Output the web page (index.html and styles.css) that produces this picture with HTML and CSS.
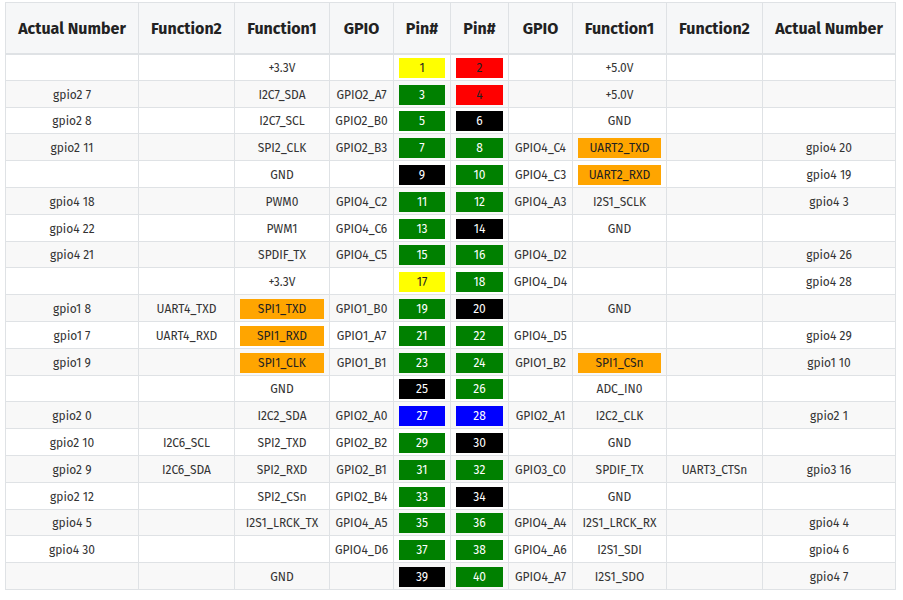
FILE: index.html
```html
<!DOCTYPE html>
<html>
<head>
<meta charset="utf-8">
<link rel="stylesheet" href="styles.css">
</head>
<body>
<table class="pins">
<colgroup>
<col class="c-act"><col class="c-f2"><col class="c-f1"><col class="c-gpio"><col class="c-pin"><col class="c-pin2"><col class="c-gpio"><col class="c-f1r"><col class="c-f2r"><col class="c-actr">
</colgroup>
<thead>
<tr><th>Actual Number</th><th>Function2</th><th>Function1</th><th>GPIO</th><th>Pin#</th><th>Pin#</th><th>GPIO</th><th>Function1</th><th>Function2</th><th>Actual Number</th></tr>
</thead>
<tbody>
<tr><td></td><td></td><td>+3.3V</td><td></td><td><div class="pin yellow">1</div></td><td><div class="pin red">2</div></td><td></td><td>+5.0V</td><td></td><td></td></tr>
<tr><td>gpio2 7</td><td></td><td>I2C7_SDA</td><td>GPIO2_A7</td><td><div class="pin green">3</div></td><td><div class="pin red">4</div></td><td></td><td>+5.0V</td><td></td><td></td></tr>
<tr><td>gpio2 8</td><td></td><td>I2C7_SCL</td><td>GPIO2_B0</td><td><div class="pin green">5</div></td><td><div class="pin black">6</div></td><td></td><td>GND</td><td></td><td></td></tr>
<tr><td>gpio2 11</td><td></td><td>SPI2_CLK</td><td>GPIO2_B3</td><td><div class="pin green">7</div></td><td><div class="pin green">8</div></td><td>GPIO4_C4</td><td><div class="pin orange">UART2_TXD</div></td><td></td><td>gpio4 20</td></tr>
<tr><td></td><td></td><td>GND</td><td></td><td><div class="pin black">9</div></td><td><div class="pin green">10</div></td><td>GPIO4_C3</td><td><div class="pin orange">UART2_RXD</div></td><td></td><td>gpio4 19</td></tr>
<tr><td>gpio4 18</td><td></td><td>PWM0</td><td>GPIO4_C2</td><td><div class="pin green">11</div></td><td><div class="pin green">12</div></td><td>GPIO4_A3</td><td>I2S1_SCLK</td><td></td><td>gpio4 3</td></tr>
<tr><td>gpio4 22</td><td></td><td>PWM1</td><td>GPIO4_C6</td><td><div class="pin green">13</div></td><td><div class="pin black">14</div></td><td></td><td>GND</td><td></td><td></td></tr>
<tr><td>gpio4 21</td><td></td><td>SPDIF_TX</td><td>GPIO4_C5</td><td><div class="pin green">15</div></td><td><div class="pin green">16</div></td><td>GPIO4_D2</td><td></td><td></td><td>gpio4 26</td></tr>
<tr><td></td><td></td><td>+3.3V</td><td></td><td><div class="pin yellow">17</div></td><td><div class="pin green">18</div></td><td>GPIO4_D4</td><td></td><td></td><td>gpio4 28</td></tr>
<tr><td>gpio1 8</td><td>UART4_TXD</td><td><div class="pin orange">SPI1_TXD</div></td><td>GPIO1_B0</td><td><div class="pin green">19</div></td><td><div class="pin black">20</div></td><td></td><td>GND</td><td></td><td></td></tr>
<tr><td>gpio1 7</td><td>UART4_RXD</td><td><div class="pin orange">SPI1_RXD</div></td><td>GPIO1_A7</td><td><div class="pin green">21</div></td><td><div class="pin green">22</div></td><td>GPIO4_D5</td><td></td><td></td><td>gpio4 29</td></tr>
<tr><td>gpio1 9</td><td></td><td><div class="pin orange">SPI1_CLK</div></td><td>GPIO1_B1</td><td><div class="pin green">23</div></td><td><div class="pin green">24</div></td><td>GPIO1_B2</td><td><div class="pin orange">SPI1_CSn</div></td><td></td><td>gpio1 10</td></tr>
<tr><td></td><td></td><td>GND</td><td></td><td><div class="pin black">25</div></td><td><div class="pin green">26</div></td><td></td><td>ADC_IN0</td><td></td><td></td></tr>
<tr><td>gpio2 0</td><td></td><td>I2C2_SDA</td><td>GPIO2_A0</td><td><div class="pin blue">27</div></td><td><div class="pin blue">28</div></td><td>GPIO2_A1</td><td>I2C2_CLK</td><td></td><td>gpio2 1</td></tr>
<tr><td>gpio2 10</td><td>I2C6_SCL</td><td>SPI2_TXD</td><td>GPIO2_B2</td><td><div class="pin green">29</div></td><td><div class="pin black">30</div></td><td></td><td>GND</td><td></td><td></td></tr>
<tr><td>gpio2 9</td><td>I2C6_SDA</td><td>SPI2_RXD</td><td>GPIO2_B1</td><td><div class="pin green">31</div></td><td><div class="pin green">32</div></td><td>GPIO3_C0</td><td>SPDIF_TX</td><td>UART3_CTSn</td><td>gpio3 16</td></tr>
<tr><td>gpio2 12</td><td></td><td>SPI2_CSn</td><td>GPIO2_B4</td><td><div class="pin green">33</div></td><td><div class="pin black">34</div></td><td></td><td>GND</td><td></td><td></td></tr>
<tr><td>gpio4 5</td><td></td><td>I2S1_LRCK_TX</td><td>GPIO4_A5</td><td><div class="pin green">35</div></td><td><div class="pin green">36</div></td><td>GPIO4_A4</td><td>I2S1_LRCK_RX</td><td></td><td>gpio4 4</td></tr>
<tr><td>gpio4 30</td><td></td><td></td><td>GPIO4_D6</td><td><div class="pin green">37</div></td><td><div class="pin green">38</div></td><td>GPIO4_A6</td><td>I2S1_SDI</td><td></td><td>gpio4 6</td></tr>
<tr><td></td><td></td><td>GND</td><td></td><td><div class="pin black">39</div></td><td><div class="pin green">40</div></td><td>GPIO4_A7</td><td>I2S1_SDO</td><td></td><td>gpio4 7</td></tr>
</tbody>
</table>
</body>
</html>
```
FILE: styles.css
```css
html, body {
  margin: 0;
  padding: 0;
  background: #fff;
}
body {
  padding: 2px 8px 0 5px;
  font-family: "Fira Sans", "Open Sans", "Noto Sans", sans-serif;
  color: #333;
}
.pins {
  border-collapse: collapse;
  table-layout: fixed;
  width: 890px;
  font-size: 12px;
}
.c-act { width: 133px; }
.c-f2 { width: 96px; }
.c-f1 { width: 95px; }
.c-gpio { width: 64px; }
.c-pin { width: 57px; }
.c-pin2 { width: 58px; }
.c-f1r { width: 94px; }
.c-f2r { width: 96px; }
.c-actr { width: 133px; }
.pins th,
.pins td {
  border: 1px solid #dfe2e5;
  text-align: center;
  white-space: nowrap;
  overflow: hidden;
}
.pins thead tr {
  height: 51px;
}
.pins th {
  background: #f6f7f8;
  font-size: 16px;
  font-weight: 700;
  color: #222;
  padding: 2px 4px 0;
  border-bottom: 2px solid #dfe2e5;
}
.pins tbody tr {
  height: 26.8px;
}
.pins td {
  padding: 2px 5px 0;
  line-height: 16px;
}
.pins tbody tr:nth-child(even) td {
  background: #f8f8f8;
}
.pin {
  height: 20px;
  line-height: 20px;
}
.yellow { background: #ffff00; color: #222; }
.red { background: #ff0000; color: #222; }
.orange { background: #ffa500; color: #222; }
.green { background: #008000; color: #fff; }
.black { background: #000; color: #fff; }
.blue { background: #0000ff; color: #fff; }
```
